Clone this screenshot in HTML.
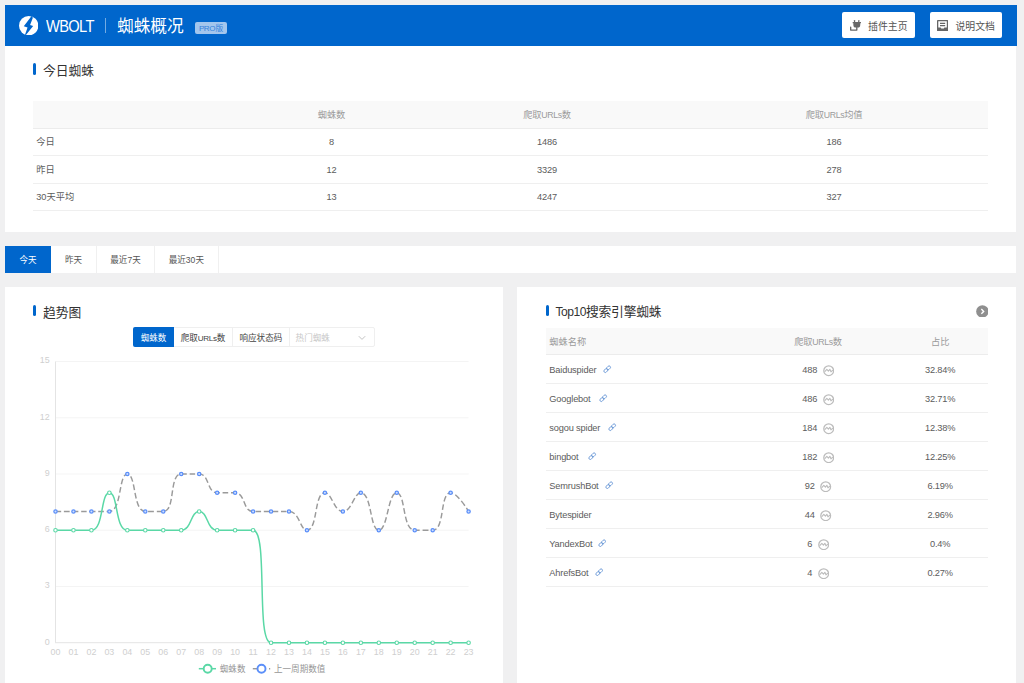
<!DOCTYPE html>
<html lang="zh-CN"><head><meta charset="utf-8"><title>WBOLT 蜘蛛概况</title><style>
*{box-sizing:border-box;margin:0;padding:0}
html,body{width:1024px;height:683px;overflow:hidden;background:#f0f0f1}
body{font-family:"Liberation Sans","Noto Sans CJK SC",sans-serif;font-size:9.24px;color:#5c5c5c;position:relative}
.z{font-family:"Liberation Sans","Noto Sans CJK SC",sans-serif;white-space:nowrap}
.en{font-size:.95em;letter-spacing:-0.045em}
.abs{position:absolute}
.hd{left:5px;top:5px;width:1011.600px;height:41px;background:#0066cc;color:#fff}
.panel{background:#fff}
.logo{left:13.8px;top:10.7px;width:19.4px;height:19.4px}
.wb{left:40.800px;top:13.4px;font-size:15.6px;line-height:18px;letter-spacing:-0.7px;transform:scaleX(.94);transform-origin:0 50%;white-space:nowrap}
.sep{left:100px;top:13px;width:1px;height:15px;background:rgba(255,255,255,.45)}
.ttl{left:112px;top:12.9px;font-size:16.7px;line-height:18px;white-space:nowrap}
.pro{left:190.3px;top:17.3px;width:31.600px;height:11.500px;background:#a3c6ed;border-radius:2px;color:#3382dc;font-size:7.700px;line-height:13.400px;text-align:center;white-space:nowrap}
.pro b{font-weight:normal;font-size:8.100px;letter-spacing:-0.5px;margin-right:.5px}
.btn{top:7.2px;height:26px;background:#fff;border-radius:2px;color:#555;font-size:9.9px;line-height:26px;white-space:nowrap}
.btn svg.ic{position:absolute;top:6.5px}
.btn span.lb{position:absolute;top:1.600px}
.st{font-size:12.75px;line-height:16px;color:#333;white-space:nowrap}
.bar{width:3px;border-radius:1.5px;background:#0066cc}
.th{background:#f9f9f9;border-bottom:1px solid #ececec;color:#9b9b9b}
.row{border-bottom:1px solid #efefef}
.c{position:absolute;white-space:nowrap;line-height:12px;transform:translateX(-50%);letter-spacing:-0.15px}
.l{position:absolute;white-space:nowrap;line-height:12px}
.tabs{left:5px;top:246.200px;width:1011.300px;height:26.400px;background:#fff}
.tab{position:absolute;top:0;height:26.6px;line-height:29.600px;text-align:center;border-right:1px solid #f0f0f0;font-size:8.55px;color:#555;white-space:nowrap}
.tab.on{background:#0066cc;color:#fff;border-right:none}
.bg{left:133px;top:327.4px;width:241.900px;height:20px;border:1px solid #efefef;border-radius:2px;background:#fff}
.bb{position:absolute;top:327.4px;height:20px;line-height:22px;text-align:center;font-size:8.55px;color:#444;white-space:nowrap}
.ax{font-family:"Liberation Sans",sans-serif;font-size:8.9px;fill:#cfcfcf}
.chart{position:absolute;left:5px;top:287px}
.lg{position:absolute;font-size:8.55px;color:#969696;line-height:12px;white-space:nowrap}
</style></head><body><div class="abs hd"><svg class="abs logo" viewBox="0 0 40 40"><circle cx="20" cy="20" r="20" fill="#fff"/><path d="M25.900 0 28.600 3.400 22.900 18.600 29.200 20.400 13.600 40 12.600 38.200 17.600 23.600 9.900 21z" fill="#0066cc"/></svg><div class="abs wb">WBOLT</div><div class="abs sep"></div><div class="abs ttl"><span class="z">蜘蛛概况</span></div><div class="abs pro"><b>PRO</b><span class="z">版</span></div><div class="abs btn" style="left:837.2px;width:73px"><svg class="ic" style="left:7.4px;top:7.5px" width="11.5" height="11.5" viewBox="0 0 12 12"><g fill="#666"><rect x="4.1" y="0" width="1.3" height="2.8" rx=".5"/><rect x="8.500" y="0" width="1.3" height="2.8" rx=".5"/><rect x="2.7" y="2.2" width="8.8" height="1.2" rx=".4"/><path d="M3.5 3.2H10.700V5.200C10.700 7 9.500 7.900 8.600 7.900H5.600C4.700 7.900 3.500 7 3.500 5.200z"/></g><path d="M7.100 7.600V10.500H0.700V7.400" fill="none" stroke="#666" stroke-width="1.4" stroke-linejoin="round" stroke-linecap="round"/></svg><span class="lb" style="left:25.9px"><span class="z">插件主页</span></span></div><div class="abs btn" style="left:924.600px;width:72.500px"><svg class="ic" style="left:7.3px;top:7.600px" width="11.100" height="11.100" viewBox="0 0 11.100 11.100"><rect width="11.100" height="11.100" rx=".5" fill="#666"/><path fill="#fff" d="M1.300 1.300H9.800V7.400H7.300L6.900 8.600H4.200L3.800 7.400H1.300z"/><path fill="#666" d="M3 2.850h5.200v1.250H3zM3 4.950h5.200v1.250H3z"/></svg><span class="lb" style="left:25.8px"><span class="z">说明文档</span></span></div></div><div class="abs panel" style="left:5px;top:46px;width:1011.300px;height:186px"></div><div class="abs bar" style="left:33px;top:63px;height:11.6px"></div><div class="abs st" style="left:43px;top:63.2px"><span class="z">今日蜘蛛</span></div><div class="abs th" style="left:33px;top:101.0px;width:955px;height:27.5px"></div><div class="l" style="left:36.2px;top:108.8px;color:#9b9b9b"></div><div class="c" style="left:331.5px;top:108.8px;color:#9b9b9b"><span class="z">蜘蛛数</span></div><div class="c" style="left:547.0px;top:108.8px;color:#9b9b9b"><span class="z">爬取</span><span class="en">URLs</span><span class="z">数</span></div><div class="c" style="left:834.0px;top:108.8px;color:#9b9b9b"><span class="z">爬取</span><span class="en">URLs</span><span class="z">均值</span></div><div class="abs row" style="left:33px;top:128.5px;width:955px;height:27.5px"></div><div class="l" style="left:36.2px;top:136.3px"><span class="z">今日</span></div><div class="c" style="left:331.5px;top:136.3px">8</div><div class="c" style="left:547.0px;top:136.3px">1486</div><div class="c" style="left:834.0px;top:136.3px">186</div><div class="abs row" style="left:33px;top:156.0px;width:955px;height:27.5px"></div><div class="l" style="left:36.2px;top:163.8px"><span class="z">昨日</span></div><div class="c" style="left:331.5px;top:163.8px">12</div><div class="c" style="left:547.0px;top:163.8px">3329</div><div class="c" style="left:834.0px;top:163.8px">278</div><div class="abs row" style="left:33px;top:183.5px;width:955px;height:27.5px"></div><div class="l" style="left:36.2px;top:191.3px">30<span class="z">天平均</span></div><div class="c" style="left:331.5px;top:191.3px">13</div><div class="c" style="left:547.0px;top:191.3px">4247</div><div class="c" style="left:834.0px;top:191.3px">327</div><div class="abs tabs"><div class="tab on" style="left:0.0px;width:46.0px"><span class="z">今天</span></div><div class="tab" style="left:46.0px;width:45.9px"><span class="z">昨天</span></div><div class="tab" style="left:91.9px;width:58.2px"><span class="z">最近</span>7<span class="z">天</span></div><div class="tab" style="left:150.1px;width:63.5px"><span class="z">最近</span>30<span class="z">天</span></div></div><div class="abs panel" style="left:5px;top:287px;width:498px;height:400px"></div><div class="abs bar" style="left:33px;top:304.6px;height:11.2px"></div><div class="abs st" style="left:43px;top:304.7px"><span class="z">趋势图</span></div><div class="abs bg"></div><div class="bb" style="left:133px;width:41px;background:#0066cc;color:#fff;border-radius:2px 0 0 2px"><span class="z">蜘蛛数</span></div><div class="bb" style="left:174px;width:58.900px;border-right:1px solid #efefef"><span class="z">爬取</span><span class="en">URLs</span><span class="z">数</span></div><div class="bb" style="left:232.900px;width:57px;border-right:1px solid #efefef"><span class="z">响应状态码</span></div><div class="bb" style="left:295.6px;color:#c8c8c8;text-align:left"><span class="z">热门蜘蛛</span></div><svg class="abs" style="left:358px;top:335px" width="8" height="6" viewBox="0 0 8 6"><path d="M0.800 1.200 4 4.400 7.200 1.200" fill="none" stroke="#bbb" stroke-width="0.9"/></svg><svg class="chart" width="498" height="400" viewBox="5 287 498 400"><line x1="55.5" x2="468.6" y1="586.46" y2="586.46" stroke="#f1f1f1" stroke-width="0.8"/><line x1="55.5" x2="468.6" y1="530.22" y2="530.22" stroke="#f1f1f1" stroke-width="0.8"/><line x1="55.5" x2="468.6" y1="473.98" y2="473.98" stroke="#f1f1f1" stroke-width="0.8"/><line x1="55.5" x2="468.6" y1="417.74" y2="417.74" stroke="#f1f1f1" stroke-width="0.8"/><line x1="55.5" x2="468.6" y1="361.50" y2="361.50" stroke="#f1f1f1" stroke-width="0.8"/><line x1="55.5" x2="55.5" y1="361.50" y2="642.70" stroke="#e4e4e4" stroke-width="1"/><line x1="55.0" x2="468.6" y1="642.70" y2="642.70" stroke="#e4e4e4" stroke-width="1"/><text class="ax" x="49.6" y="644.60" text-anchor="end">0</text><text class="ax" x="49.6" y="588.36" text-anchor="end">3</text><text class="ax" x="49.6" y="532.12" text-anchor="end">6</text><text class="ax" x="49.6" y="475.88" text-anchor="end">9</text><text class="ax" x="49.6" y="419.64" text-anchor="end">12</text><text class="ax" x="49.6" y="363.40" text-anchor="end">15</text><text class="ax" x="55.50" y="655" text-anchor="middle">00</text><text class="ax" x="73.46" y="655" text-anchor="middle">01</text><text class="ax" x="91.42" y="655" text-anchor="middle">02</text><text class="ax" x="109.38" y="655" text-anchor="middle">03</text><text class="ax" x="127.34" y="655" text-anchor="middle">04</text><text class="ax" x="145.30" y="655" text-anchor="middle">05</text><text class="ax" x="163.27" y="655" text-anchor="middle">06</text><text class="ax" x="181.23" y="655" text-anchor="middle">07</text><text class="ax" x="199.19" y="655" text-anchor="middle">08</text><text class="ax" x="217.15" y="655" text-anchor="middle">09</text><text class="ax" x="235.11" y="655" text-anchor="middle">10</text><text class="ax" x="253.07" y="655" text-anchor="middle">11</text><text class="ax" x="271.03" y="655" text-anchor="middle">12</text><text class="ax" x="288.99" y="655" text-anchor="middle">13</text><text class="ax" x="306.95" y="655" text-anchor="middle">14</text><text class="ax" x="324.91" y="655" text-anchor="middle">15</text><text class="ax" x="342.87" y="655" text-anchor="middle">16</text><text class="ax" x="360.83" y="655" text-anchor="middle">17</text><text class="ax" x="378.80" y="655" text-anchor="middle">18</text><text class="ax" x="396.76" y="655" text-anchor="middle">19</text><text class="ax" x="414.72" y="655" text-anchor="middle">20</text><text class="ax" x="432.68" y="655" text-anchor="middle">21</text><text class="ax" x="450.64" y="655" text-anchor="middle">22</text><text class="ax" x="468.60" y="655" text-anchor="middle">23</text><path d="M55.50 511.47C55.50 511.47 64.48 511.47 73.46 511.47C82.44 511.47 82.44 511.47 91.42 511.47C100.40 511.47 103.96 511.47 109.38 511.47C121.92 511.47 118.36 473.98 127.34 473.98C136.32 473.98 132.76 511.47 145.30 511.47C150.72 511.47 157.85 511.47 163.27 511.47C175.81 511.47 168.68 473.98 181.23 473.98C186.64 473.98 191.84 473.98 199.19 473.98C209.80 473.98 206.53 492.73 217.15 492.73C224.49 492.73 227.76 492.73 235.11 492.73C245.73 492.73 242.45 511.47 253.07 511.47C260.41 511.47 262.05 511.47 271.03 511.47C280.01 511.47 281.65 511.47 288.99 511.47C299.61 511.47 300.05 530.22 306.95 530.22C318.01 530.22 313.86 492.73 324.91 492.73C331.82 492.73 333.89 511.47 342.87 511.47C351.85 511.47 353.93 492.73 360.83 492.73C371.89 492.73 369.82 530.22 378.80 530.22C387.78 530.22 387.78 492.73 396.76 492.73C405.74 492.73 402.18 530.22 414.72 530.22C420.14 530.22 427.26 530.22 432.68 530.22C445.22 530.22 439.58 492.73 450.64 492.73C457.54 492.73 468.60 511.47 468.60 511.47" fill="none" stroke="#9a9a9a" stroke-width="1.45" stroke-dasharray="5.69 2.84"/><circle cx="55.50" cy="511.47" r="1.65" fill="#cfdfff" stroke="#5b8ff9" stroke-width="1.25"/><circle cx="73.46" cy="511.47" r="1.65" fill="#cfdfff" stroke="#5b8ff9" stroke-width="1.25"/><circle cx="91.42" cy="511.47" r="1.65" fill="#cfdfff" stroke="#5b8ff9" stroke-width="1.25"/><circle cx="109.38" cy="511.47" r="1.65" fill="#cfdfff" stroke="#5b8ff9" stroke-width="1.25"/><circle cx="127.34" cy="473.98" r="1.65" fill="#cfdfff" stroke="#5b8ff9" stroke-width="1.25"/><circle cx="145.30" cy="511.47" r="1.65" fill="#cfdfff" stroke="#5b8ff9" stroke-width="1.25"/><circle cx="163.27" cy="511.47" r="1.65" fill="#cfdfff" stroke="#5b8ff9" stroke-width="1.25"/><circle cx="181.23" cy="473.98" r="1.65" fill="#cfdfff" stroke="#5b8ff9" stroke-width="1.25"/><circle cx="199.19" cy="473.98" r="1.65" fill="#cfdfff" stroke="#5b8ff9" stroke-width="1.25"/><circle cx="217.15" cy="492.73" r="1.65" fill="#cfdfff" stroke="#5b8ff9" stroke-width="1.25"/><circle cx="235.11" cy="492.73" r="1.65" fill="#cfdfff" stroke="#5b8ff9" stroke-width="1.25"/><circle cx="253.07" cy="511.47" r="1.65" fill="#cfdfff" stroke="#5b8ff9" stroke-width="1.25"/><circle cx="271.03" cy="511.47" r="1.65" fill="#cfdfff" stroke="#5b8ff9" stroke-width="1.25"/><circle cx="288.99" cy="511.47" r="1.65" fill="#cfdfff" stroke="#5b8ff9" stroke-width="1.25"/><circle cx="306.95" cy="530.22" r="1.65" fill="#cfdfff" stroke="#5b8ff9" stroke-width="1.25"/><circle cx="324.91" cy="492.73" r="1.65" fill="#cfdfff" stroke="#5b8ff9" stroke-width="1.25"/><circle cx="342.87" cy="511.47" r="1.65" fill="#cfdfff" stroke="#5b8ff9" stroke-width="1.25"/><circle cx="360.83" cy="492.73" r="1.65" fill="#cfdfff" stroke="#5b8ff9" stroke-width="1.25"/><circle cx="378.80" cy="530.22" r="1.65" fill="#cfdfff" stroke="#5b8ff9" stroke-width="1.25"/><circle cx="396.76" cy="492.73" r="1.65" fill="#cfdfff" stroke="#5b8ff9" stroke-width="1.25"/><circle cx="414.72" cy="530.22" r="1.65" fill="#cfdfff" stroke="#5b8ff9" stroke-width="1.25"/><circle cx="432.68" cy="530.22" r="1.65" fill="#cfdfff" stroke="#5b8ff9" stroke-width="1.25"/><circle cx="450.64" cy="492.73" r="1.65" fill="#cfdfff" stroke="#5b8ff9" stroke-width="1.25"/><circle cx="468.60" cy="511.47" r="1.65" fill="#cfdfff" stroke="#5b8ff9" stroke-width="1.25"/><path d="M55.50 530.22C55.50 530.22 64.48 530.22 73.46 530.22C82.44 530.22 86.00 530.22 91.42 530.22C103.96 530.22 100.40 492.73 109.38 492.73C118.36 492.73 114.80 530.22 127.34 530.22C132.76 530.22 136.32 530.22 145.30 530.22C154.28 530.22 154.28 530.22 163.27 530.22C172.25 530.22 173.88 530.22 181.23 530.22C191.84 530.22 190.21 511.47 199.19 511.47C208.17 511.47 206.53 530.22 217.15 530.22C224.49 530.22 226.13 530.22 235.11 530.22C244.09 530.22 250.62 530.22 253.07 530.22C268.58 530.22 255.52 642.70 271.03 642.70C273.48 642.70 280.01 642.70 288.99 642.70C297.97 642.70 297.97 642.70 306.95 642.70C315.93 642.70 315.93 642.70 324.91 642.70C333.89 642.70 333.89 642.70 342.87 642.70C351.85 642.70 351.85 642.70 360.83 642.70C369.82 642.70 369.82 642.70 378.80 642.70C387.78 642.70 387.78 642.70 396.76 642.70C405.74 642.70 405.74 642.70 414.72 642.70C423.70 642.70 423.70 642.70 432.68 642.70C441.66 642.70 441.66 642.70 450.64 642.70C459.62 642.70 468.60 642.70 468.60 642.70" fill="none" stroke="#5ad8a6" stroke-width="1.5"/><circle cx="55.50" cy="530.22" r="1.75" fill="#fff" stroke="#5ad8a6" stroke-width="1.1"/><circle cx="73.46" cy="530.22" r="1.75" fill="#fff" stroke="#5ad8a6" stroke-width="1.1"/><circle cx="91.42" cy="530.22" r="1.75" fill="#fff" stroke="#5ad8a6" stroke-width="1.1"/><circle cx="109.38" cy="492.73" r="1.75" fill="#fff" stroke="#5ad8a6" stroke-width="1.1"/><circle cx="127.34" cy="530.22" r="1.75" fill="#fff" stroke="#5ad8a6" stroke-width="1.1"/><circle cx="145.30" cy="530.22" r="1.75" fill="#fff" stroke="#5ad8a6" stroke-width="1.1"/><circle cx="163.27" cy="530.22" r="1.75" fill="#fff" stroke="#5ad8a6" stroke-width="1.1"/><circle cx="181.23" cy="530.22" r="1.75" fill="#fff" stroke="#5ad8a6" stroke-width="1.1"/><circle cx="199.19" cy="511.47" r="1.75" fill="#fff" stroke="#5ad8a6" stroke-width="1.1"/><circle cx="217.15" cy="530.22" r="1.75" fill="#fff" stroke="#5ad8a6" stroke-width="1.1"/><circle cx="235.11" cy="530.22" r="1.75" fill="#fff" stroke="#5ad8a6" stroke-width="1.1"/><circle cx="253.07" cy="530.22" r="1.75" fill="#fff" stroke="#5ad8a6" stroke-width="1.1"/><circle cx="271.03" cy="642.70" r="1.75" fill="#fff" stroke="#5ad8a6" stroke-width="1.1"/><circle cx="288.99" cy="642.70" r="1.75" fill="#fff" stroke="#5ad8a6" stroke-width="1.1"/><circle cx="306.95" cy="642.70" r="1.75" fill="#fff" stroke="#5ad8a6" stroke-width="1.1"/><circle cx="324.91" cy="642.70" r="1.75" fill="#fff" stroke="#5ad8a6" stroke-width="1.1"/><circle cx="342.87" cy="642.70" r="1.75" fill="#fff" stroke="#5ad8a6" stroke-width="1.1"/><circle cx="360.83" cy="642.70" r="1.75" fill="#fff" stroke="#5ad8a6" stroke-width="1.1"/><circle cx="378.80" cy="642.70" r="1.75" fill="#fff" stroke="#5ad8a6" stroke-width="1.1"/><circle cx="396.76" cy="642.70" r="1.75" fill="#fff" stroke="#5ad8a6" stroke-width="1.1"/><circle cx="414.72" cy="642.70" r="1.75" fill="#fff" stroke="#5ad8a6" stroke-width="1.1"/><circle cx="432.68" cy="642.70" r="1.75" fill="#fff" stroke="#5ad8a6" stroke-width="1.1"/><circle cx="450.64" cy="642.70" r="1.75" fill="#fff" stroke="#5ad8a6" stroke-width="1.1"/><circle cx="468.60" cy="642.70" r="1.75" fill="#fff" stroke="#5ad8a6" stroke-width="1.1"/><line x1="198.800" x2="216" y1="668.700" y2="668.700" stroke="#5ad8a6" stroke-width="1.5"/><circle cx="207.700" cy="668.700" r="4" fill="#fff" stroke="#5ad8a6" stroke-width="1.9"/><line x1="252.800" x2="257.500" y1="668.700" y2="668.700" stroke="#9a9a9a" stroke-width="1.45"/><line x1="269" x2="270.200" y1="668.700" y2="668.700" stroke="#9a9a9a" stroke-width="1.45"/><circle cx="261.500" cy="668.700" r="4" fill="#fff" stroke="#5b8ff9" stroke-width="1.9"/></svg><div class="lg" style="left:219.800px;top:663px"><span class="z">蜘蛛数</span></div><div class="lg" style="left:274px;top:663px"><span class="z">上一周期数值</span></div><div class="abs panel" style="left:517.3px;top:287px;width:499px;height:400px"></div><div class="abs bar" style="left:545.5px;top:304.8px;height:11px"></div><div class="abs st" style="left:555.6px;top:304.4px;letter-spacing:-0.15px"><span class="en">Top10</span><span class="z">搜索引擎蜘蛛</span></div><svg class="abs" style="left:975.6px;top:304.6px" width="12.800" height="12.800" viewBox="0 0 16 16"><circle cx="8" cy="8" r="7.800" fill="#8f8f8f"/><path d="M6.700 5.100 9.600 8 6.700 10.900" fill="none" stroke="#fff" stroke-width="1.7"/></svg><div class="abs th" style="left:545.5px;top:328px;width:442.7px;height:27px"></div><div class="l" style="left:549.2px;top:336px;color:#9b9b9b"><span class="z">蜘蛛名称</span></div><div class="c" style="left:818px;top:336px;color:#9b9b9b"><span class="z">爬取</span><span class="en">URLs</span><span class="z">数</span></div><div class="c" style="left:940.2px;top:336px;color:#9b9b9b"><span class="z">占比</span></div><div class="abs row" style="left:545.5px;top:355.6px;width:442.7px;height:28.900px"></div><div class="l" style="left:549.3px;top:364.3px;letter-spacing:-0.16px">Baiduspider</div><svg class="lk" width="8.4" height="8.4" viewBox="0 0 16 16" style="position:absolute;left:603.2px;top:365.4px"><g fill="none" stroke="#5f92d4" stroke-width="1.55" transform="rotate(-45 8 8)"><rect x="0.2" y="5.300" width="8.600" height="5.400" rx="2.700"/><rect x="7.200" y="5.300" width="8.600" height="5.400" rx="2.700"/></g></svg><div class="c" style="left:809.8px;top:364.3px">488</div><svg width="11.4" height="11.4" viewBox="0 0 16 16" style="position:absolute;left:822.9px;top:365.4px"><circle cx="8" cy="8" r="6.900" fill="none" stroke="#bcbcbc" stroke-width="1.75"/><path d="M2.800 9 5.400 6.200 7.600 8.600 9.600 6 11.200 9.600 13.400 7.400" fill="none" stroke="#bcbcbc" stroke-width="1.55" stroke-linejoin="round" stroke-linecap="round"/></svg><div class="c" style="left:940.2px;top:364.3px">32.84%</div><div class="abs row" style="left:545.5px;top:384.5px;width:442.7px;height:28.900px"></div><div class="l" style="left:549.3px;top:393.2px;letter-spacing:-0.16px">Googlebot</div><svg class="lk" width="8.4" height="8.4" viewBox="0 0 16 16" style="position:absolute;left:599.2px;top:394.3px"><g fill="none" stroke="#5f92d4" stroke-width="1.55" transform="rotate(-45 8 8)"><rect x="0.2" y="5.300" width="8.600" height="5.400" rx="2.700"/><rect x="7.200" y="5.300" width="8.600" height="5.400" rx="2.700"/></g></svg><div class="c" style="left:809.8px;top:393.2px">486</div><svg width="11.4" height="11.4" viewBox="0 0 16 16" style="position:absolute;left:822.9px;top:394.3px"><circle cx="8" cy="8" r="6.900" fill="none" stroke="#bcbcbc" stroke-width="1.75"/><path d="M2.800 9 5.400 6.200 7.600 8.600 9.600 6 11.200 9.600 13.400 7.400" fill="none" stroke="#bcbcbc" stroke-width="1.55" stroke-linejoin="round" stroke-linecap="round"/></svg><div class="c" style="left:940.2px;top:393.2px">32.71%</div><div class="abs row" style="left:545.5px;top:413.4px;width:442.7px;height:28.900px"></div><div class="l" style="left:549.3px;top:422.1px;letter-spacing:-0.16px">sogou spider</div><svg class="lk" width="8.4" height="8.4" viewBox="0 0 16 16" style="position:absolute;left:608.3px;top:423.2px"><g fill="none" stroke="#5f92d4" stroke-width="1.55" transform="rotate(-45 8 8)"><rect x="0.2" y="5.300" width="8.600" height="5.400" rx="2.700"/><rect x="7.200" y="5.300" width="8.600" height="5.400" rx="2.700"/></g></svg><div class="c" style="left:809.8px;top:422.1px">184</div><svg width="11.4" height="11.4" viewBox="0 0 16 16" style="position:absolute;left:822.9px;top:423.2px"><circle cx="8" cy="8" r="6.900" fill="none" stroke="#bcbcbc" stroke-width="1.75"/><path d="M2.800 9 5.400 6.200 7.600 8.600 9.600 6 11.200 9.600 13.400 7.400" fill="none" stroke="#bcbcbc" stroke-width="1.55" stroke-linejoin="round" stroke-linecap="round"/></svg><div class="c" style="left:940.2px;top:422.1px">12.38%</div><div class="abs row" style="left:545.5px;top:442.3px;width:442.7px;height:28.900px"></div><div class="l" style="left:549.3px;top:451.0px;letter-spacing:-0.16px">bingbot</div><svg class="lk" width="8.4" height="8.4" viewBox="0 0 16 16" style="position:absolute;left:588.3px;top:452.1px"><g fill="none" stroke="#5f92d4" stroke-width="1.55" transform="rotate(-45 8 8)"><rect x="0.2" y="5.300" width="8.600" height="5.400" rx="2.700"/><rect x="7.200" y="5.300" width="8.600" height="5.400" rx="2.700"/></g></svg><div class="c" style="left:809.8px;top:451.0px">182</div><svg width="11.4" height="11.4" viewBox="0 0 16 16" style="position:absolute;left:822.9px;top:452.1px"><circle cx="8" cy="8" r="6.900" fill="none" stroke="#bcbcbc" stroke-width="1.75"/><path d="M2.800 9 5.400 6.200 7.600 8.600 9.600 6 11.200 9.600 13.400 7.400" fill="none" stroke="#bcbcbc" stroke-width="1.55" stroke-linejoin="round" stroke-linecap="round"/></svg><div class="c" style="left:940.2px;top:451.0px">12.25%</div><div class="abs row" style="left:545.5px;top:471.2px;width:442.7px;height:28.900px"></div><div class="l" style="left:549.3px;top:479.9px;letter-spacing:-0.16px">SemrushBot</div><svg class="lk" width="8.4" height="8.4" viewBox="0 0 16 16" style="position:absolute;left:605.3px;top:481.0px"><g fill="none" stroke="#5f92d4" stroke-width="1.55" transform="rotate(-45 8 8)"><rect x="0.2" y="5.300" width="8.600" height="5.400" rx="2.700"/><rect x="7.200" y="5.300" width="8.600" height="5.400" rx="2.700"/></g></svg><div class="c" style="left:809.8px;top:479.9px">92</div><svg width="11.4" height="11.4" viewBox="0 0 16 16" style="position:absolute;left:820.4px;top:481.0px"><circle cx="8" cy="8" r="6.900" fill="none" stroke="#bcbcbc" stroke-width="1.75"/><path d="M2.800 9 5.400 6.200 7.600 8.600 9.600 6 11.200 9.600 13.400 7.400" fill="none" stroke="#bcbcbc" stroke-width="1.55" stroke-linejoin="round" stroke-linecap="round"/></svg><div class="c" style="left:940.2px;top:479.9px">6.19%</div><div class="abs row" style="left:545.5px;top:500.1px;width:442.7px;height:28.900px"></div><div class="l" style="left:549.3px;top:508.8px;letter-spacing:-0.16px">Bytespider</div><div class="c" style="left:809.8px;top:508.8px">44</div><svg width="11.4" height="11.4" viewBox="0 0 16 16" style="position:absolute;left:820.4px;top:509.9px"><circle cx="8" cy="8" r="6.900" fill="none" stroke="#bcbcbc" stroke-width="1.75"/><path d="M2.800 9 5.400 6.200 7.600 8.600 9.600 6 11.200 9.600 13.400 7.400" fill="none" stroke="#bcbcbc" stroke-width="1.55" stroke-linejoin="round" stroke-linecap="round"/></svg><div class="c" style="left:940.2px;top:508.8px">2.96%</div><div class="abs row" style="left:545.5px;top:529.0px;width:442.7px;height:28.900px"></div><div class="l" style="left:549.3px;top:537.7px;letter-spacing:-0.16px">YandexBot</div><svg class="lk" width="8.4" height="8.4" viewBox="0 0 16 16" style="position:absolute;left:597.8px;top:538.8px"><g fill="none" stroke="#5f92d4" stroke-width="1.55" transform="rotate(-45 8 8)"><rect x="0.2" y="5.300" width="8.600" height="5.400" rx="2.700"/><rect x="7.200" y="5.300" width="8.600" height="5.400" rx="2.700"/></g></svg><div class="c" style="left:809.8px;top:537.7px">6</div><svg width="11.4" height="11.4" viewBox="0 0 16 16" style="position:absolute;left:817.9px;top:538.8px"><circle cx="8" cy="8" r="6.900" fill="none" stroke="#bcbcbc" stroke-width="1.75"/><path d="M2.800 9 5.400 6.200 7.600 8.600 9.600 6 11.200 9.600 13.400 7.400" fill="none" stroke="#bcbcbc" stroke-width="1.55" stroke-linejoin="round" stroke-linecap="round"/></svg><div class="c" style="left:940.2px;top:537.7px">0.4%</div><div class="abs row" style="left:545.5px;top:557.9px;width:442.7px;height:28.900px"></div><div class="l" style="left:549.3px;top:566.6px;letter-spacing:-0.16px">AhrefsBot</div><svg class="lk" width="8.4" height="8.4" viewBox="0 0 16 16" style="position:absolute;left:594.8px;top:567.7px"><g fill="none" stroke="#5f92d4" stroke-width="1.55" transform="rotate(-45 8 8)"><rect x="0.2" y="5.300" width="8.600" height="5.400" rx="2.700"/><rect x="7.200" y="5.300" width="8.600" height="5.400" rx="2.700"/></g></svg><div class="c" style="left:809.8px;top:566.6px">4</div><svg width="11.4" height="11.4" viewBox="0 0 16 16" style="position:absolute;left:817.9px;top:567.7px"><circle cx="8" cy="8" r="6.900" fill="none" stroke="#bcbcbc" stroke-width="1.75"/><path d="M2.800 9 5.400 6.200 7.600 8.600 9.600 6 11.200 9.600 13.400 7.400" fill="none" stroke="#bcbcbc" stroke-width="1.55" stroke-linejoin="round" stroke-linecap="round"/></svg><div class="c" style="left:940.2px;top:566.6px">0.27%</div></body></html>
